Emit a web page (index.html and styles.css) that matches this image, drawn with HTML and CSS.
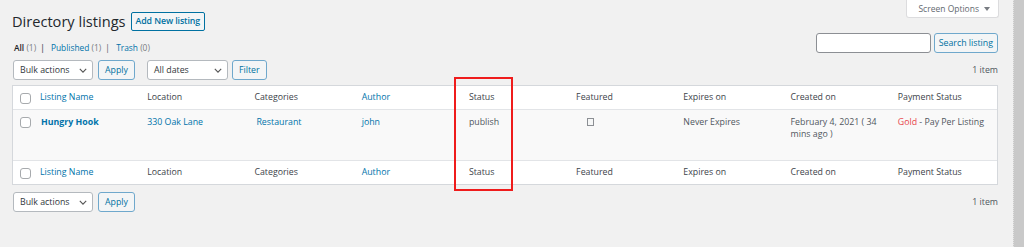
FILE: index.html
```html
<!DOCTYPE html>
<html lang="en">
<head>
  <meta charset="UTF-8">
  <meta name="viewport" content="width=device-width, initial-scale=1.0">
  <title>Directory listings</title>
  <link rel="stylesheet" href="styles.css">
</head>
<body>
  <div class="wrap">
    <div class="top">
      <div class="heading">
        <h1>Directory listings</h1>
        <a class="page-title-action" href="#">Add New listing</a>
      </div>
      <button class="screen-options">Screen Options <span class="caret"></span></button>
    </div>

    <div class="views-row">
      <ul class="subsubsub">
        <li class="current">All <span class="num">(1)</span><span class="sep">|</span></li>
        <li><a href="#">Published</a> <span class="num">(1)</span><span class="sep">|</span></li>
        <li><a href="#">Trash</a> <span class="num">(0)</span></li>
      </ul>
      <div class="search-box">
        <input type="search" class="search-input">
        <button class="button">Search listing</button>
      </div>
    </div>

    <div class="tablenav">
      <div class="actions">
        <div class="select select-bulk">Bulk actions
          <svg class="chevron" viewBox="0 0 10 6" width="8" height="5"><path d="M1 1l4 4 4-4" fill="none" stroke="#555" stroke-width="1.4"/></svg>
        </div>
        <button class="button">Apply</button>
        <div class="select select-dates">All dates
          <svg class="chevron" viewBox="0 0 10 6" width="8" height="5"><path d="M1 1l4 4 4-4" fill="none" stroke="#555" stroke-width="1.4"/></svg>
        </div>
        <button class="button">Filter</button>
      </div>
      <span class="count">1 item</span>
    </div>

    <div class="table-wrap">
      <table class="list-table">
        <thead>
          <tr>
            <th class="check-column"><span class="checkbox"></span></th>
            <th><a href="#">Listing Name</a></th>
            <th>Location</th>
            <th>Categories</th>
            <th><a href="#">Author</a></th>
            <th>Status</th>
            <th>Featured</th>
            <th>Expires on</th>
            <th>Created on</th>
            <th>Payment Status</th>
          </tr>
        </thead>
        <tbody>
          <tr>
            <td class="check-column"><span class="checkbox"></span></td>
            <td><a class="row-title" href="#">Hungry Hook</a></td>
            <td><a href="#">330 Oak Lane</a></td>
            <td><a class="cat" href="#">Restaurant</a></td>
            <td><a href="#">john</a></td>
            <td>publish</td>
            <td><span class="featured-icon"></span></td>
            <td>Never Expires</td>
            <td>February 4, 2021 ( 34 mins ago )</td>
            <td><span class="plan">Gold</span> - Pay Per Listing</td>
          </tr>
        </tbody>
        <tfoot>
          <tr>
            <th class="check-column"><span class="checkbox"></span></th>
            <th><a href="#">Listing Name</a></th>
            <th>Location</th>
            <th>Categories</th>
            <th><a href="#">Author</a></th>
            <th>Status</th>
            <th>Featured</th>
            <th>Expires on</th>
            <th>Created on</th>
            <th>Payment Status</th>
          </tr>
        </tfoot>
      </table>
      <div class="highlight"></div>
    </div>

    <div class="tablenav bottom">
      <div class="actions">
        <div class="select select-bulk">Bulk actions
          <svg class="chevron" viewBox="0 0 10 6" width="8" height="5"><path d="M1 1l4 4 4-4" fill="none" stroke="#555" stroke-width="1.4"/></svg>
        </div>
        <button class="button">Apply</button>
      </div>
      <span class="count">1 item</span>
    </div>
  </div>
  <div class="scrollbar"></div>
</body>
</html>
```

FILE: styles.css
```css
/* General */
html, body {
  height: 100%;
}

body {
  margin: 0;
  display: flex;
  background: #f1f1f1;
  font-family: 'Open Sans', sans-serif;
  font-size: 8.8px;
  line-height: 12px;
  color: #50575e;
  overflow: hidden;
}

a {
  color: #0073aa;
  text-decoration: none;
}

.wrap {
  flex: 1;
  padding: 0 15px 0 12px;
}

.scrollbar {
  width: 10px;
  background: #c9c9c9;
  border-left: 1px dotted #e4e4e4;
}

/* Header */
.top {
  display: flex;
  justify-content: space-between;
  align-items: flex-start;
}

.heading {
  display: flex;
  align-items: center;
  margin-top: 12px;
}

h1 {
  margin: 0;
  font-size: 14.6px;
  font-weight: 400;
  line-height: 19px;
  color: #23282d;
}

.page-title-action {
  margin-left: 5px;
  height: 19px;
  box-sizing: border-box;
  padding: 0 4px;
  border: 1px solid #0071a1;
  border-radius: 2px;
  background: #f3f5f6;
  color: #0071a1;
  font-weight: 600;
  line-height: 17px;
  letter-spacing: -0.1px;
}

.screen-options {
  display: flex;
  align-items: center;
  height: 18px;
  margin-right: -1px;
  padding: 0 8px 0 11px;
  border: 1px solid #dcdcde;
  border-top: none;
  border-radius: 0 0 3px 3px;
  background: #fff;
  font-family: inherit;
  font-size: 8.5px;
  color: #646970;
}

.caret {
  display: inline-block;
  margin-left: 5px;
  border-left: 3px solid transparent;
  border-right: 3px solid transparent;
  border-top: 4px solid #787c82;
}

/* Views + search */
.views-row {
  display: flex;
  justify-content: space-between;
  margin-top: 2px;
}

.subsubsub {
  list-style: none;
  margin: 9px 0 0 2px;
  padding: 0;
  color: #646970;
  font-size: 8.4px;
}

.subsubsub li {
  display: inline;
}

.subsubsub .sep {
  margin: 0 4px;
  color: #50575e;
}

.subsubsub .current {
  color: #1d2327;
  font-weight: 600;
}

.subsubsub .num {
  font-weight: 400;
  color: #787c82;
}

.search-box {
  display: flex;
  gap: 3px;
}

.search-input {
  width: 115px;
  height: 20px;
  box-sizing: border-box;
  border: 1px solid #8c8f94;
  border-radius: 3px;
  background: #fff;
  margin: 0;
}

.button {
  height: 20px;
  box-sizing: border-box;
  padding: 0 6px;
  border: 1px solid #6fa8cc;
  border-radius: 3px;
  background: #f3f5f6;
  color: #0071a1;
  font-family: inherit;
  font-size: 8.8px;
}

.search-box .button {
  padding: 0 4px;
}

/* Table nav */
.tablenav {
  display: flex;
  justify-content: space-between;
  align-items: center;
  margin: 6px 0 5px;
}

.tablenav.bottom {
  margin-top: 7px;
}

.actions {
  display: flex;
  align-items: center;
  padding-left: 1px;
}

.select {
  height: 20px;
  box-sizing: border-box;
  display: flex;
  align-items: center;
  justify-content: space-between;
  padding: 0 5px 0 6px;
  border: 1px solid #b4b9be;
  border-radius: 3px;
  background: #fff;
  color: #32373c;
}

.select-bulk {
  width: 80px;
  margin-right: 5px;
}

.select-dates {
  width: 81px;
  margin: 0 4px 0 12px;
}

.count {
  color: #50575e;
}

/* Table */
.table-wrap {
  position: relative;
}

.list-table {
  width: 100%;
  table-layout: fixed;
  border-collapse: separate;
  border-spacing: 0;
  border: 1px solid #d5d8dc;
  background: #fff;
}

.list-table th,
.list-table td {
  text-align: left;
  font-weight: 400;
  vertical-align: top;
  padding: 5px 8px 6px;
  color: #3c434a;
}

.list-table thead th {
  border-bottom: 1px solid #e2e4e7;
}

.list-table tfoot th {
  border-top: 1px solid #e2e4e7;
}

.list-table tbody tr {
  height: 50px;
  background: #f9f9f9;
}

.list-table tbody td {
  padding-top: 6px;
  color: #50575e;
}

.list-table .check-column {
  width: 12px;
  padding: 7px 0 0 7px;
}

.checkbox {
  display: block;
  width: 11px;
  height: 11px;
  box-sizing: border-box;
  border: 1px solid #a7aaad;
  border-radius: 3px;
  background: #fff;
}

.row-title {
  font-weight: 700;
  padding-left: 1px;
}

.cat {
  padding-left: 2px;
}

.featured-icon {
  display: inline-block;
  width: 5px;
  height: 6px;
  margin: 2px 0 0 11px;
  border: 1px solid #8c8f94;
  background: #f6f7f7;
}

.plan {
  color: #e8474d;
}

.highlight {
  position: absolute;
  left: 442px;
  top: -8px;
  width: 59px;
  height: 114px;
  box-sizing: border-box;
  border: 2px solid #ef1c1c;
}
```
